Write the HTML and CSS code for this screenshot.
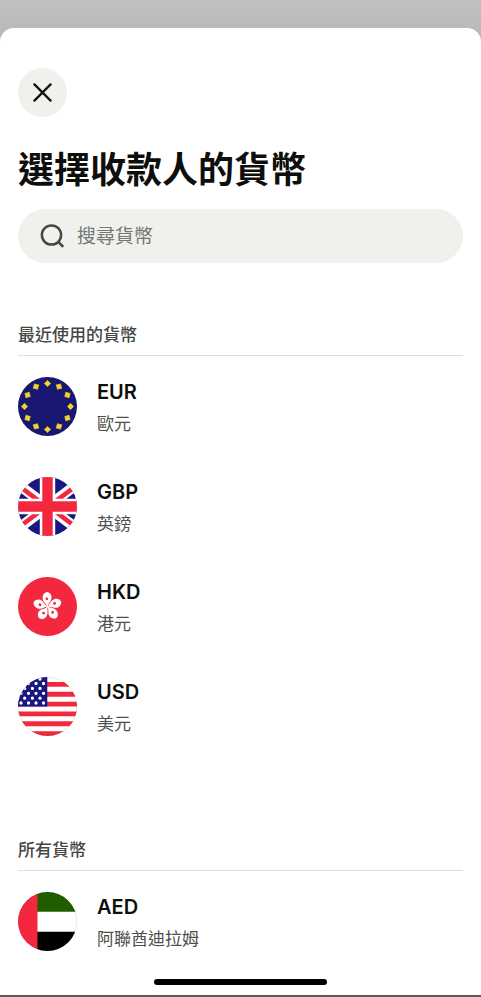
FILE: index.html
```html
<!DOCTYPE html>
<html lang="zh-Hant">
<head>
<meta charset="utf-8">
<meta name="viewport" content="width=device-width, initial-scale=1">
<title>選擇收款人的貨幣</title>
<link rel="stylesheet" href="styles.css">
</head>
<body>
<main class="sheet">
  <button class="close" type="button" aria-label="關閉">
    <svg width="19" height="19" viewBox="0 0 20 20" aria-hidden="true"><path d="M1.5 1.5 18.5 18.5M18.5 1.5 1.5 18.5" fill="none" stroke="#111" stroke-width="2.4" stroke-linecap="round"/></svg>
  </button>
  <h1 class="title">選擇收款人的貨幣</h1>
  <label class="search">
    <svg width="24" height="24" viewBox="0 0 24 24" aria-hidden="true"><g fill="none" stroke="#454745" stroke-width="2.5"><circle cx="11.5" cy="11" r="9.6"/><path d="M18 17.6 23.2 22.8"/></g></svg>
    <input class="search-input" type="search" placeholder="搜尋貨幣" aria-label="搜尋貨幣">
  </label>

  <section class="group">
    <h2 class="group-title">最近使用的貨幣</h2>
    <ul class="list">
      <li><a class="row" href="#eur">
        <svg class="flag" viewBox="0 0 59 59" aria-hidden="true">
          <defs><path id="star" d="M29.5 3.4 30.9 4.9 32.7 6.5 30.9 8.1 29.5 9.6 28.1 8.1 26.3 6.5 28.1 4.9Z" stroke="#f0cf2c" stroke-width=".7" stroke-linejoin="round"/></defs>
          <circle cx="29.5" cy="29.5" r="29.5" fill="#181873"/>
          <g fill="#f5d22d">
            <use href="#star"/><use href="#star" transform="rotate(30 29.5 29.5)"/><use href="#star" transform="rotate(60 29.5 29.5)"/><use href="#star" transform="rotate(90 29.5 29.5)"/><use href="#star" transform="rotate(120 29.5 29.5)"/><use href="#star" transform="rotate(150 29.5 29.5)"/><use href="#star" transform="rotate(180 29.5 29.5)"/><use href="#star" transform="rotate(210 29.5 29.5)"/><use href="#star" transform="rotate(240 29.5 29.5)"/><use href="#star" transform="rotate(270 29.5 29.5)"/><use href="#star" transform="rotate(300 29.5 29.5)"/><use href="#star" transform="rotate(330 29.5 29.5)"/>
          </g>
        </svg>
        <span class="text"><span class="code">EUR</span><span class="name">歐元</span></span>
      </a></li>
      <li><a class="row" href="#gbp">
        <svg class="flag" viewBox="0 0 59 59" aria-hidden="true">
          <defs><clipPath id="round"><circle cx="29.5" cy="29.5" r="29.5"/></clipPath></defs>
          <g clip-path="url(#round)">
            <path fill="#181880" d="M0 0h59v59H0z"/>
            <path stroke="#fff" stroke-width="10.4" d="M-5 3.6 64 55.4M64 3.6-5 55.4"/>
            <path stroke="#f3283e" stroke-width="4.6" d="M-5 4.4 29.5 30.3M64 4.4 29.5 30.3M-5 54.6 29.5 28.7M64 54.6 29.5 28.7"/>
            <path fill="#fff" d="M21.8 0h15.4v59H21.8zM0 21.8h59v15.4H0z"/>
            <path fill="#f3283e" d="M24.3 0h10.4v59H24.3zM0 24.3h59v10.4H0z"/>
          </g>
        </svg>
        <span class="text"><span class="code">GBP</span><span class="name">英鎊</span></span>
      </a></li>
      <li><a class="row" href="#hkd">
        <svg class="flag" viewBox="0 0 59 59" aria-hidden="true">
          <defs><g id="petal"><path fill="#fff" d="M29.2 29.6C28.6 26.4 24.6 25.6 24.6 20.8 24.6 17.4 26.6 15.4 29.4 15 33 16.2 34.2 19.4 33.2 22.4 32.4 24.8 30 26 30 29.6Z"/><circle cx="28.8" cy="21.8" r="1.4" fill="#f3283e"/></g></defs>
          <circle cx="29.5" cy="29.5" r="29.5" fill="#f3283e"/>
          <use href="#petal"/><use href="#petal" transform="rotate(72 29.5 29.5)"/><use href="#petal" transform="rotate(144 29.5 29.5)"/><use href="#petal" transform="rotate(216 29.5 29.5)"/><use href="#petal" transform="rotate(288 29.5 29.5)"/>
        </svg>
        <span class="text"><span class="code">HKD</span><span class="name">港元</span></span>
      </a></li>
      <li><a class="row" href="#usd">
        <svg class="flag" viewBox="0 0 59 59" aria-hidden="true">
          <g clip-path="url(#round)">
            <path fill="#fff" d="M0 0h59v59H0z"/>
            <path stroke="#f3283e" stroke-width="4.9" d="M0 7.4h59M0 17.2h59M0 27.1h59M0 36.9h59M0 46.7h59M0 56.6h59"/>
            <path fill="#181880" d="M0 0h29.3v29.5H0z"/>
            <path fill="none" stroke="#fff" stroke-width="3.3" stroke-linecap="round" d="M22 2h0M10.5 6.5h0M18 6.5h0M25.5 6.5h0M6.7 11.4h0M14.4 11.4h0M22 11.4h0M3 16.3h0M10.5 16.3h0M18 16.3h0M25.5 16.3h0M6.7 21.2h0M14.4 21.2h0M22 21.2h0M3 26h0M10.5 26h0M18 26h0M25.5 26h0"/>
          </g>
          <circle cx="29.5" cy="29.5" r="29.2" fill="none" stroke="#000" stroke-opacity=".16" stroke-width=".6"/>
        </svg>
        <span class="text"><span class="code">USD</span><span class="name">美元</span></span>
      </a></li>
    </ul>
  </section>

  <section class="group group-all">
    <h2 class="group-title">所有貨幣</h2>
    <ul class="list">
      <li><a class="row" href="#aed">
        <svg class="flag" viewBox="0 0 59 59" aria-hidden="true">
          <g clip-path="url(#round)">
            <path fill="#fff" d="M0 0h59v59H0z"/>
            <path fill="#205c00" d="M19 0h40v19.7H19z"/>
            <path fill="#000" d="M19 39.7h40V59H19z"/>
            <path fill="#f3283e" d="M0 0h19.5v59H0z"/>
          </g>
          <circle cx="29.5" cy="29.5" r="29.2" fill="none" stroke="#000" stroke-opacity=".16" stroke-width=".6"/>
        </svg>
        <span class="text"><span class="code">AED</span><span class="name">阿聯酋迪拉姆</span></span>
      </a></li>
    </ul>
  </section>
  <div class="home-bar"></div>
</main>
</body>
</html>
```
FILE: styles.css
```css
* {
  box-sizing: border-box;
}

html {
  height: 100%;
}

body {
  margin: 0;
  min-height: 100%;
  padding-top: 28px;
  display: flex;
  flex-direction: column;
  background: linear-gradient(#bfc1be, #b7b9b6 40px);
  font-family: Inter, "Noto Sans CJK TC", sans-serif;
  color: #0e0f0c;
}

.sheet {
  flex: 1;
  display: flex;
  flex-direction: column;
  padding: 40px 18px 10px;
  background: #fff;
  border-radius: 14px 14px 0 0;
  border-bottom: 2px solid #55595a;
}

.close {
  width: 49px;
  height: 49px;
  padding: 0;
  display: grid;
  place-items: center;
  border: 0;
  border-radius: 50%;
  background: #f0f1ec;
}

.title {
  margin: 29px 0 15px;
  font-size: 36px;
  line-height: 48px;
  font-weight: 700;
}

.search {
  display: flex;
  align-items: center;
  gap: 13px;
  height: 54px;
  padding: 0 22px;
  border-radius: 27px;
  background: #f0f1ec;
}

.search-input {
  flex: 1;
  min-width: 0;
  padding: 2px 0 0;
  border: 0;
  outline: 0;
  background: none;
  font: inherit;
  font-size: 19px;
  line-height: 28px;
  color: #0e0f0c;
}

.search-input::placeholder {
  color: #757773;
  opacity: 1;
}

.group {
  margin-top: 60px;
}

.group-all {
  margin-top: 82px;
}

.group-title {
  margin: 0;
  padding-bottom: 8px;
  border-bottom: 1px solid #dedfdd;
  font-size: 17px;
  line-height: 24px;
  font-weight: 500;
  color: #454745;
}

.list {
  margin: 0;
  padding: 0;
  list-style: none;
}

.row {
  display: flex;
  align-items: center;
  gap: 20px;
  height: 100px;
  color: inherit;
  text-decoration: none;
}

.flag {
  flex: none;
  width: 59px;
  height: 59px;
}

.text {
  display: flex;
  flex-direction: column;
  gap: 4px;
  padding-top: 4px;
}

.code {
  font-size: 20px;
  line-height: 28px;
  font-weight: 600;
}

.name {
  font-size: 17px;
  line-height: 28px;
  color: #4d4f4c;
}

.home-bar {
  width: 173px;
  height: 6px;
  margin: auto auto 0;
  border-radius: 3px;
  background: #000;
}
```
